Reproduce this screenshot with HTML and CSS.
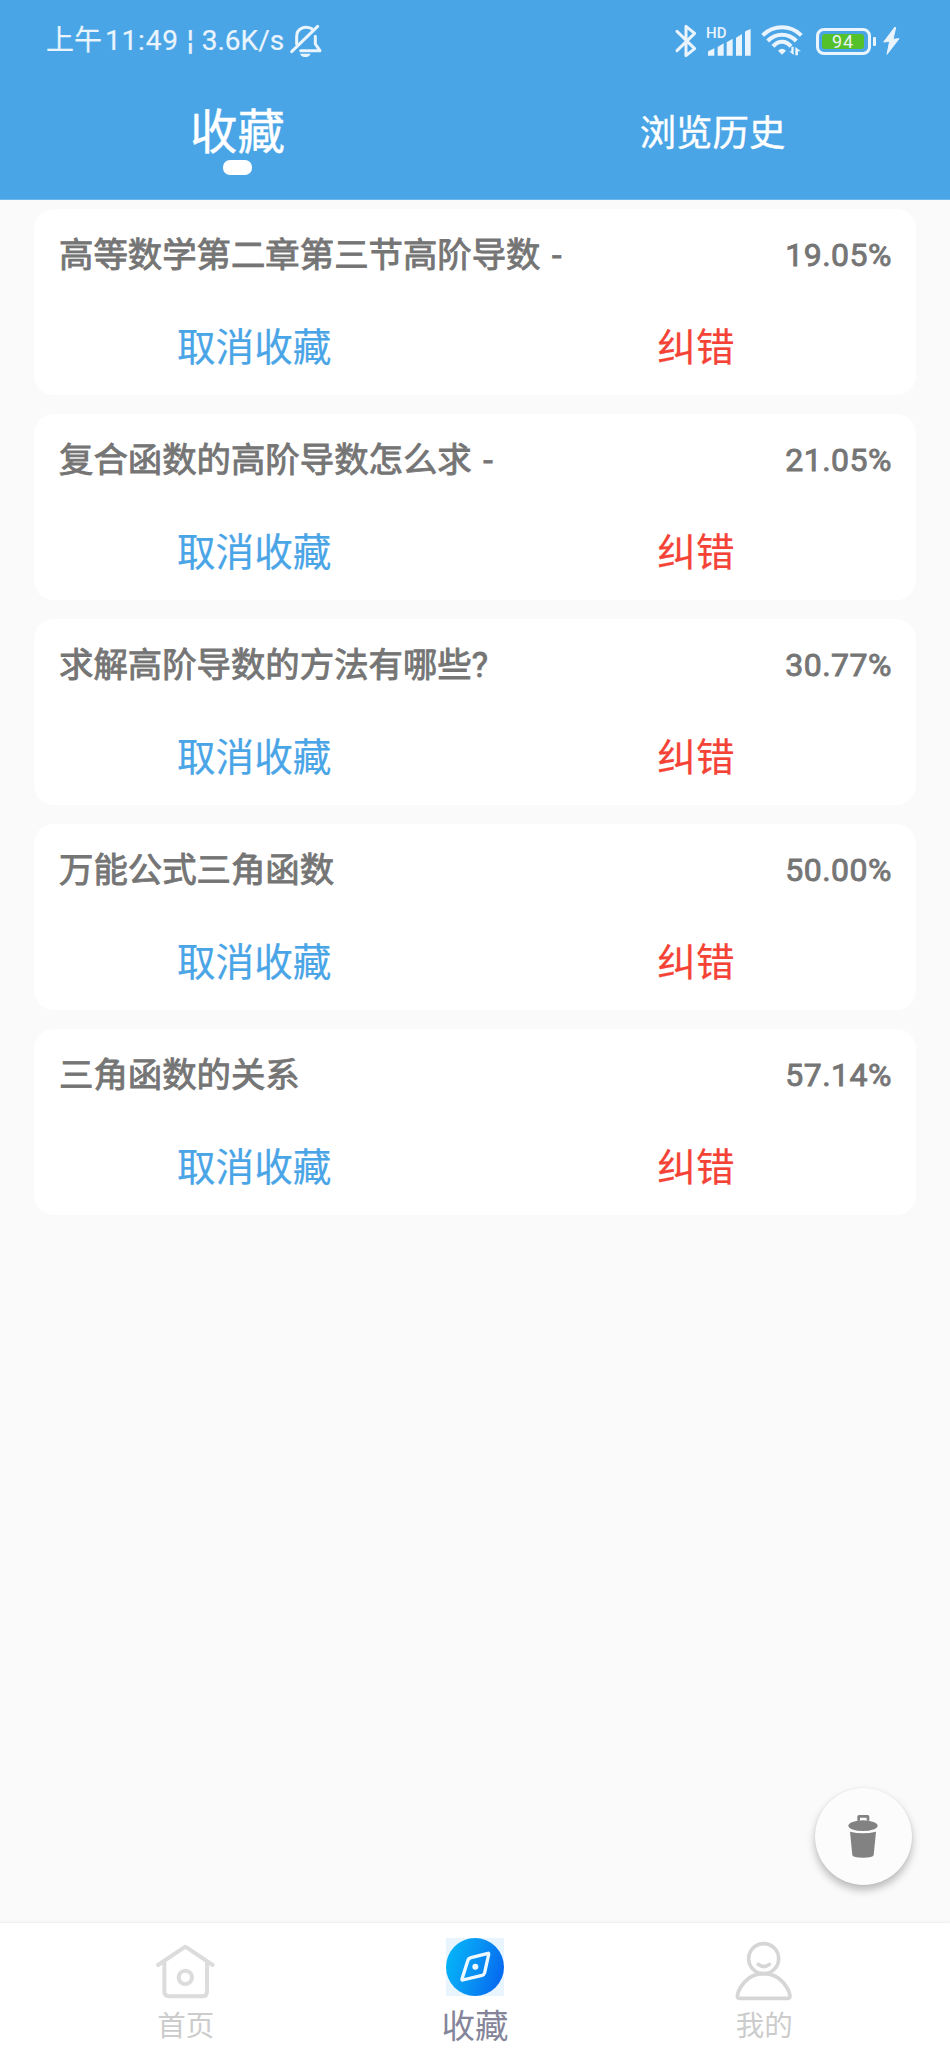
FILE: index.html
```html
<!DOCTYPE html>
<html lang="zh-CN">
<head>
    <meta charset="UTF-8">
    <title>收藏</title>
    <link rel="stylesheet" href="styles.css">
</head>
<body>
    <div class="header">
        <div class="status">
            <div class="status_l">
                <span>上午<span class="time">11:49</span></span>
                <span class="line">¦</span>
                <span class="speed">3.6K/s</span>
                <svg class="bell" width="32" height="34" viewBox="0 0 96 102" fill="none" stroke="#e9f4fd" stroke-width="9" stroke-linecap="round" stroke-linejoin="round">
                    <path d="M20 60V38C20 12 46 4 65 14M5 83L83 7M76 37V60L90 80H32"/>
                    <path d="M30 89H62Q58 99 46 99Q34 99 30 89Z" fill="#e9f4fd" stroke="none"/>
                </svg>
            </div>
            <div class="status_r">
                <!-- 蓝牙 -->
                <svg width="22" height="36" viewBox="0 0 66 108" fill="none" stroke="#e9f4fd" stroke-width="9" stroke-linejoin="round" stroke-linecap="round">
                    <path d="M6 25L59 77L33 98V10L59 31L6 83"/>
                </svg>
                <!-- 信号 -->
                <div class="signal">
                    <span class="hd">HD</span>
                    <svg width="44" height="28" viewBox="0 0 132 84" fill="#e9f4fd">
                        <path d="M3 80V69Q3 67 5 66L22 58V80ZM32 80V54L50 43V80ZM59 80V40L77 29V80ZM87 80V26L105 15V80ZM114 80V9Q114 7 116 6L131 0V80Z"/>
                    </svg>
                </div>
                <!-- wifi -->
                <svg class="wifi" width="42" height="32" viewBox="0 0 126 96" fill="none" stroke="#e9f4fd" stroke-width="12">
                    <path d="M5 31Q30 7 63 7Q96 7 121 31M20 48Q38 29 63 29Q88 29 106 48M36 64Q48 50 63 50Q78 50 90 64"/>
                    <path d="M51 77Q63 65 75 77L63 89ZM98 65V90L85 79H91V65ZM103 91V66L120 79H111V91Z" fill="#e9f4fd" stroke="none"/>
                </svg>
                <!-- 电池 -->
                <div class="battery"><span>94</span></div>
                <svg class="bolt" width="17" height="28" viewBox="0 0 51 84" fill="#e9f4fd" stroke="#e9f4fd" stroke-width="3" stroke-linejoin="round">
                    <path d="M36 0L2 45L20 43L12 82L48 35L30 37L38 2Z"/>
                </svg>
            </div>
        </div>
        <div class="tabs">
            <div class="tab active">收藏</div>
            <div class="tab">浏览历史</div>
        </div>
    </div>

    <div class="list">
        <div class="card">
            <div class="card_t"><span>高等数学第二章第三节高阶导数 -</span><span class="rate">19.05%</span></div>
            <div class="card_d"><span class="cancel">取消收藏</span><span class="error">纠错</span></div>
        </div>
        <div class="card">
            <div class="card_t"><span>复合函数的高阶导数怎么求 -</span><span class="rate">21.05%</span></div>
            <div class="card_d"><span class="cancel">取消收藏</span><span class="error">纠错</span></div>
        </div>
        <div class="card">
            <div class="card_t"><span>求解高阶导数的方法有哪些?</span><span class="rate">30.77%</span></div>
            <div class="card_d"><span class="cancel">取消收藏</span><span class="error">纠错</span></div>
        </div>
        <div class="card">
            <div class="card_t"><span>万能公式三角函数</span><span class="rate">50.00%</span></div>
            <div class="card_d"><span class="cancel">取消收藏</span><span class="error">纠错</span></div>
        </div>
        <div class="card">
            <div class="card_t"><span>三角函数的关系</span><span class="rate">57.14%</span></div>
            <div class="card_d"><span class="cancel">取消收藏</span><span class="error">纠错</span></div>
        </div>
    </div>

    <!-- 清空按钮 -->
    <div class="clear">
        <svg width="30" height="44" viewBox="0 0 90 132" fill="#828282">
            <path d="M28 20V8Q28 3 33 3H59Q64 3 64 8V20H56V11H36V20Z"/>
            <ellipse cx="45" cy="35" rx="44" ry="16"/>
            <path d="M6 53Q45 62 84 53L77 124Q75 131 45 131Q15 131 13 124Z"/>
        </svg>
    </div>

    <div class="nav">
        <div class="nav_item">
            <svg width="58" height="58" viewBox="0 0 174 174" fill="none" stroke="#dcdcdc" stroke-width="12" stroke-linecap="round" stroke-linejoin="round">
                <path d="M3 81L85 26L167 81M22 72V160Q22 175 37 175H137Q150 175 150 160V72"/>
                <circle cx="85" cy="118" r="20"/>
            </svg>
            <span>首页</span>
        </div>
        <div class="nav_item on">
            <svg width="58" height="58" viewBox="0 0 174 174">
                <defs>
                    <linearGradient id="blue" x1="0" y1="0.3" x2="1" y2="0.6">
                        <stop offset="0" stop-color="#04b4f8"/>
                        <stop offset="0.5" stop-color="#0893f4"/>
                        <stop offset="1" stop-color="#0568ef"/>
                    </linearGradient>
                </defs>
                <rect width="174" height="174" fill="#e8f4fe"/>
                <circle cx="87" cy="87" r="87" fill="url(#blue)"/>
                <path d="M75 59L126 46Q128 45 128 49L116 104Q114 110 108 112L50 126Q47 127 48 123L65 69Q67 61 75 59Z" fill="none" stroke="#eef8ff" stroke-width="10"/>
                <circle cx="88" cy="86" r="9" fill="#eef8ff"/>
            </svg>
            <span>收藏</span>
        </div>
        <div class="nav_item">
            <svg width="58" height="58" viewBox="0 0 174 174" fill="none" stroke="#d6d6d6" stroke-width="11" stroke-linecap="round" stroke-linejoin="round">
                <circle cx="86" cy="62" r="45"/>
                <path d="M70 79Q86 92 103 79"/>
                <path d="M86 107Q123 107 146 135Q163 156 165 174Q165 181 157 181H15Q7 181 7 174Q9 156 26 135Q49 107 86 107Z"/>
            </svg>
            <span>我的</span>
        </div>
    </div>
</body>
</html>
```

FILE: styles.css
```css
* {
    box-sizing: border-box;
}
body {
    margin: 0;
    height: 2059px;
    display: flex;
    flex-direction: column;
    background-color: #fafafa;
    font-family: Roboto, "Noto Sans CJK SC", sans-serif;
    white-space: nowrap;
    overflow: hidden;
}
svg {
    display: block;
    flex: none;
    overflow: visible;
}

/* 顶部 */
.header {
    height: 200px;
    background-color: #4aa5e7;
    border-bottom: 1px solid #6db7ec;
    color: #fff;
}
.status {
    height: 82px;
    padding: 0 50px 0 46px;
    display: flex;
    justify-content: space-between;
    align-items: center;
    color: #e9f4fd;
    font-size: 28px;
}
.status_l,
.status_r {
    display: flex;
    align-items: center;
}
.status_l {
    height: 82px;
    line-height: 82px;
    -webkit-text-stroke: 0.2px #e9f4fd;
}
.status_l .time {
    margin-left: 3px;
    letter-spacing: 0.8px;
}
.status_l .line {
    width: 23px;
    text-align: center;
}
.bell {
    margin-left: 6px;
}
.signal {
    position: relative;
    margin-left: 10px;
    padding-top: 3px;
}
.signal .hd {
    position: absolute;
    left: -1px;
    top: 0;
    font-size: 15px;
    line-height: 14px;
    font-weight: 500;
}
.wifi {
    margin-left: 10px;
}
.battery {
    position: relative;
    width: 55px;
    height: 27px;
    margin-left: 13px;
    padding: 3px;
    border: 3px solid #e9f4fd;
    border-radius: 8px;
}
.battery::after {
    content: "";
    position: absolute;
    right: -8px;
    top: 6px;
    width: 3px;
    height: 9px;
    border-radius: 1px;
    background-color: #e9f4fd;
}
.battery span {
    display: block;
    width: 42px;
    height: 15px;
    border-radius: 3px;
    background-color: #54c02a;
    font-size: 18px;
    line-height: 16px;
    letter-spacing: 1px;
    text-align: center;
}
.bolt {
    margin-left: 12px;
}
.tabs {
    display: flex;
    height: 100px;
}
.tab {
    flex: 1;
    display: flex;
    flex-direction: column;
    align-items: center;
    font-size: 36.4px;
    line-height: 103px;
    -webkit-text-stroke: 0.4px #fff;
}
.tab.active {
    font-size: 47.5px;
    line-height: 103px;
}
.tab.active::after {
    content: "";
    width: 29px;
    height: 15px;
    margin-top: -25px;
    border-radius: 7px;
    background-color: #fff;
}

/* 列表 */
.list {
    flex: 1;
    padding: 9px 34px 0;
    display: flex;
    flex-direction: column;
    gap: 19px;
}
.card {
    height: 186px;
    border-radius: 20px;
    background-color: #fff;
}
.card_t {
    height: 86px;
    padding: 0 24px 0 25px;
    display: flex;
    justify-content: space-between;
    align-items: center;
    color: #757575;
    font-size: 34.4px;
    word-spacing: 3px;
    -webkit-text-stroke: 0.9px #757575;
}
.card_t .rate {
    font-size: 32px;
    letter-spacing: 0.5px;
    margin-top: 6px;
}
.card_d {
    height: 98px;
    padding-left: 143px;
    display: flex;
    align-items: center;
    gap: 326px;
    font-size: 38.6px;
    -webkit-text-stroke-width: 0.2px;
}
.cancel {
    color: #4aa5e7;
}
.error {
    color: #f44336;
}

/* 清空 */
.clear {
    width: 97px;
    height: 97px;
    margin: 0 38px 38px auto;
    padding: 0 1px 2px 0;
    border-radius: 50%;
    background-color: #fcfcfc;
    box-shadow: 0 5px 8px rgba(0, 0, 0, 0.26), 0 0 2px rgba(0, 0, 0, 0.08);
    display: flex;
    justify-content: center;
    align-items: center;
}

/* 底部导航 */
.nav {
    height: 136px;
    padding: 15px 41px 0;
    background-color: #fff;
    box-shadow: 0 -1px 2px rgba(0, 0, 0, 0.06);
    display: flex;
}
.nav_item {
    flex: 1;
    display: flex;
    flex-direction: column;
    align-items: center;
    color: #ccc;
    font-size: 28.5px;
}
.nav_item span {
    line-height: 62px;
}
.nav_item.on {
    color: #85859a;
    font-size: 33.5px;
}
```
